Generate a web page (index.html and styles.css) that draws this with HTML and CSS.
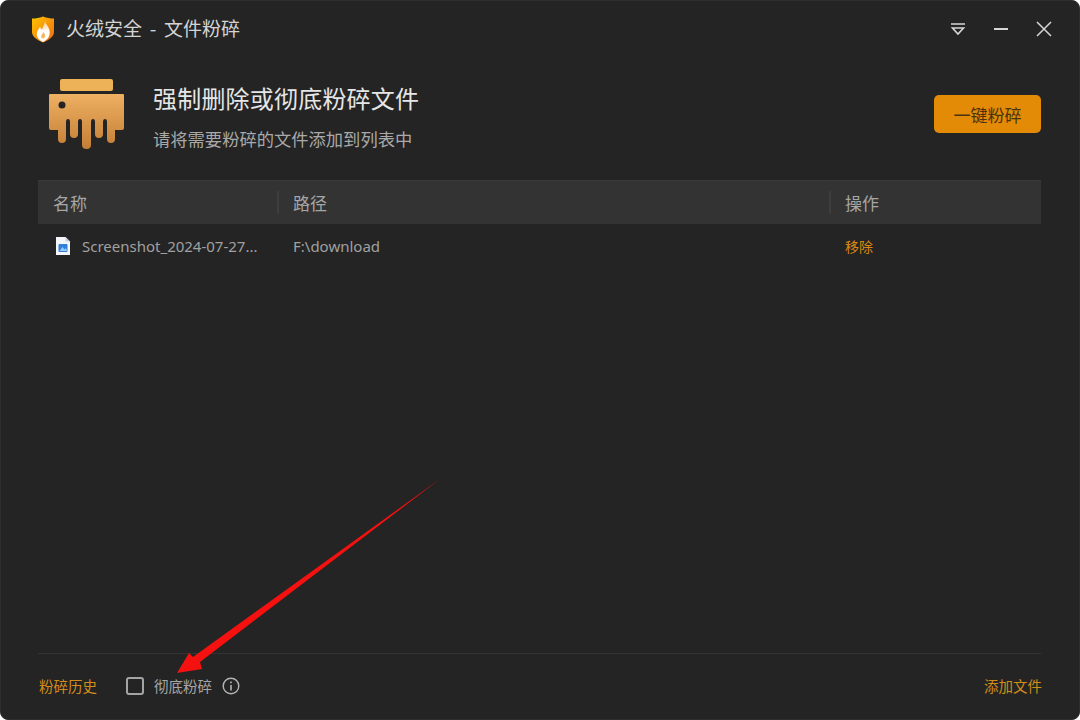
FILE: index.html
```html
<!DOCTYPE html>
<html>
<head>
    <title>火绒安全 - 文件粉碎</title>
    <meta charset="utf-8">
    <link rel="stylesheet" href="styles.css">
</head>
<body>
    <div class="window">
        <div class="titlebar">
            <div class="brand">
                <svg class="logo" width="26" height="30" viewBox="0 0 26 30">
                    <defs>
                        <linearGradient id="shield" x1="0" y1="0" x2="1" y2="1">
                            <stop offset="0" stop-color="#ffc400"/>
                            <stop offset="1" stop-color="#ee6a10"/>
                        </linearGradient>
                        <linearGradient id="flame" x1="0" y1="0" x2="0" y2="1">
                            <stop offset="0" stop-color="#ffc67a"/>
                            <stop offset="0.5" stop-color="#ffffff"/>
                        </linearGradient>
                    </defs>
                    <path d="M13 2.500 C17 4 20 4.600 24 4.600 L24 18 C24 22.500 19 26 13 28.500 C7 26 2 22.500 2 18 L2 4.600 C6 4.600 9 4 13 2.500 Z" fill="url(#shield)"/>
                    <path d="M15 7 C16 11 20.500 14 19.600 20 C19 24 16 26.500 13 28 C9.500 26.500 6.500 23.500 6.800 19.500 C7 16.500 9 15 10 12.500 C10.600 14 11.200 15 12 15.500 C13 13 14.500 10 15 7 Z" fill="url(#flame)"/>
                    <path d="M13.500 18 C14.300 19.500 15.500 20.800 15 22.600 C14.700 23.800 13.900 24.400 13 24.600 C11.800 24.300 11 23.300 11.200 22 C11.400 20.500 13 19.500 13.500 18 Z" fill="#f6b65a"/>
                </svg>
                <span class="app-title">火绒安全 - 文件粉碎</span>
            </div>
            <div class="win-btns">
                <svg width="16" height="14" viewBox="0 0 16 14" fill="none" stroke="#d6d6d6" stroke-width="1.600">
                    <path d="M1 2 H15"/>
                    <path d="M2.500 6 H13.500 L8 12 Z"/>
                </svg>
                <svg width="16" height="14" viewBox="0 0 16 14" fill="none" stroke="#d6d6d6" stroke-width="1.800">
                    <path d="M1 7 H15"/>
                </svg>
                <svg width="16" height="16" viewBox="0 0 16 16" fill="none" stroke="#d6d6d6" stroke-width="1.500">
                    <path d="M1 1 L15 15 M15 1 L1 15"/>
                </svg>
            </div>
        </div>

        <div class="hero">
            <svg class="hero-icon" width="78" height="72" viewBox="0 0 78 72">
                <defs>
                    <linearGradient id="body" x1="0" y1="0" x2="0" y2="1">
                        <stop offset="0" stop-color="#eeb062"/>
                        <stop offset="1" stop-color="#c37e36"/>
                    </linearGradient>
                </defs>
                <rect x="12" y="1" width="53" height="12" rx="2" fill="#edb257"/>
                <path d="M1 17 Q1 16 2 16 H75 Q76 16 76 17 V50 Q76 52 74 52 H67 V61 Q67 65 63 65 Q59 65 59 61 V44 Q59 41 57 41 Q55 41 55 44 V56 Q55 60 51 60 Q47 60 47 56 V44 Q47 41 45 41 Q43 41 43 44 V67 Q43 71 38.500 71 Q34 71 34 67 V44 Q34 41 32 41 Q30 41 30 44 V56 Q30 60 26 60 Q22 60 22 56 V44 Q22 41 20 41 Q18 41 18 44 V61 Q18 65 14 65 Q10 65 10 61 V52 H3 Q1 52 1 50 Z" fill="url(#body)"/>
                <circle cx="14" cy="27" r="3.500" fill="#242424"/>
            </svg>
            <div class="hero-text">
                <h1>强制删除或彻底粉碎文件</h1>
                <p>请将需要粉碎的文件添加到列表中</p>
            </div>
            <button class="shred-btn">一键粉碎</button>
        </div>

        <div class="table">
            <div class="thead">
                <div class="th">名称</div>
                <div class="th"><span class="sep"></span>路径</div>
                <div class="th"><span class="sep"></span>操作</div>
            </div>
            <div class="row">
                <div class="file">
                    <svg width="16" height="20" viewBox="0 0 16 20">
                        <path d="M1 1 H10.500 L15 5.500 V19 H1 Z" fill="#f4f6fa"/>
                        <path d="M10.500 1 V5.500 H15 Z" fill="#c4cfdf"/>
                        <rect x="3.500" y="8" width="9" height="8" rx="1" fill="#2f7fdc"/>
                        <path d="M4.500 15 L7.500 11 L9.500 13.500 L11 12 L12 15 Z" fill="#9cc9f5"/>
                    </svg>
                    <span>Screenshot_2024-07-27...</span>
                </div>
                <div class="path">F:\download</div>
                <div class="remove">移除</div>
            </div>
        </div>

        <div class="footer">
            <span class="link">粉碎历史</span>
            <label class="check">
                <span class="box"></span>
                <span>彻底粉碎</span>
            </label>
            <svg class="info" width="18" height="18" viewBox="0 0 18 18" fill="none" stroke="#b4b4b4" stroke-width="1.400">
                <circle cx="9" cy="9" r="7.800"/>
                <path d="M9 8 V13.500" stroke-width="1.600"/>
                <path d="M9 4.600 V6.200" stroke-width="1.600"/>
            </svg>
            <span class="link add">添加文件</span>
        </div>

        <!-- red annotation arrow drawn on top of the screenshot -->
        <svg class="arrow" width="1080" height="720" viewBox="0 0 1080 720">
            <path d="M440 479 L200 662 L202 669 L177 673 L189 653 L193 657 Z" fill="#f5110f"/>
        </svg>
    </div>
</body>
</html>
```

FILE: styles.css
```css
* { box-sizing: border-box; }

html, body { margin: 0; height: 100%; background: #ffffff; }

body {
    font-family: "Noto Sans", "Noto Sans CJK SC", sans-serif;
    overflow: hidden;
}

.window {
    position: relative;
    width: 1080px;
    height: 720px;
    display: flex;
    flex-direction: column;
    background: #242424;
    border: 1px solid #2e2e2e;
    border-radius: 8px;
    overflow: hidden;
    padding: 0 38px 0 37px;
}

/* title bar */
.titlebar {
    display: flex;
    align-items: center;
    justify-content: space-between;
    height: 56px;
    flex-shrink: 0;
}
.brand { display: flex; align-items: center; gap: 10px; margin-left: -8px; }
.logo { display: block; }
.app-title {
    margin-bottom: 4px;
    font-size: 19px;
    word-spacing: 3.500px;
    color: #d4d4d4;
    font-family: "Noto Sans CJK SC", sans-serif;
}
.win-btns { display: flex; align-items: center; gap: 27px; margin-right: -11px; }
.win-btns svg { display: block; }

/* top section */
.hero {
    display: flex;
    align-items: center;
    height: 123px;
    padding-left: 10px;
    flex-shrink: 0;
}
.hero-icon { display: block; margin-top: -10px; }
.hero-text { margin: 0 0 5px 27px; flex: 1; }
.hero-text h1 {
    margin: 0 0 11px;
    font-size: 24px;
    letter-spacing: 0.200px;
    line-height: 34px;
    font-weight: 400;
    color: #e6e6e6;
    font-family: "Noto Sans CJK SC", sans-serif;
}
.hero-text p {
    margin: 0;
    font-size: 17.300px;
    line-height: 26px;
    color: #a9a9a9;
    font-family: "Noto Sans CJK SC", sans-serif;
}
.shred-btn {
    width: 107px;
    height: 38px;
    margin-bottom: 9px;
    background: #e38a06;
    border: none;
    border-radius: 5px;
    color: #4a3410;
    font-size: 17px;
    font-family: "Noto Sans CJK SC", sans-serif;
    padding: 0;
}

/* file table */
.table { flex: 1; }
.thead, .row {
    display: grid;
    grid-template-columns: 240px 552px 1fr;
    align-items: center;
}
.thead {
    height: 44px;
    background: #333333;
    border-top: 1px solid #3a3a3a;
}
.th {
    position: relative;
    padding-left: 15px;
    font-size: 17px;
    color: #a6a6a6;
    font-family: "Noto Sans CJK SC", sans-serif;
}
.sep {
    position: absolute;
    left: -1px;
    top: 1px;
    bottom: 1px;
    border-left: 2px solid #3d3d3d;
}
.row { height: 43px; font-size: 15px; color: #a0a0a0; }
.file { display: flex; align-items: center; gap: 11px; padding-left: 17px; }
.file svg { display: block; }
.path { padding-left: 15px; }
.remove {
    padding-left: 15px;
    font-size: 14px;
    color: #d98a14;
    font-family: "Noto Sans CJK SC", sans-serif;
}

/* bottom bar */
.footer {
    display: flex;
    align-items: center;
    height: 66px;
    padding: 0 0 2px 1px;
    border-top: 1px solid #333333;
    font-size: 14.500px;
    font-family: "Noto Sans CJK SC", sans-serif;
    color: #a6a6a6;
}
.link { color: #d18c1a; }
.check { display: flex; align-items: center; gap: 10px; margin-left: 29px; }
.box {
    width: 18px;
    height: 18px;
    border: 2px solid #a4a4a4;
    border-radius: 3px;
}
.info { display: block; margin-left: 10px; }
.add { margin: 0 -1px 0 auto; }

.arrow { position: absolute; left: -1px; top: -1px; pointer-events: none; }
```
